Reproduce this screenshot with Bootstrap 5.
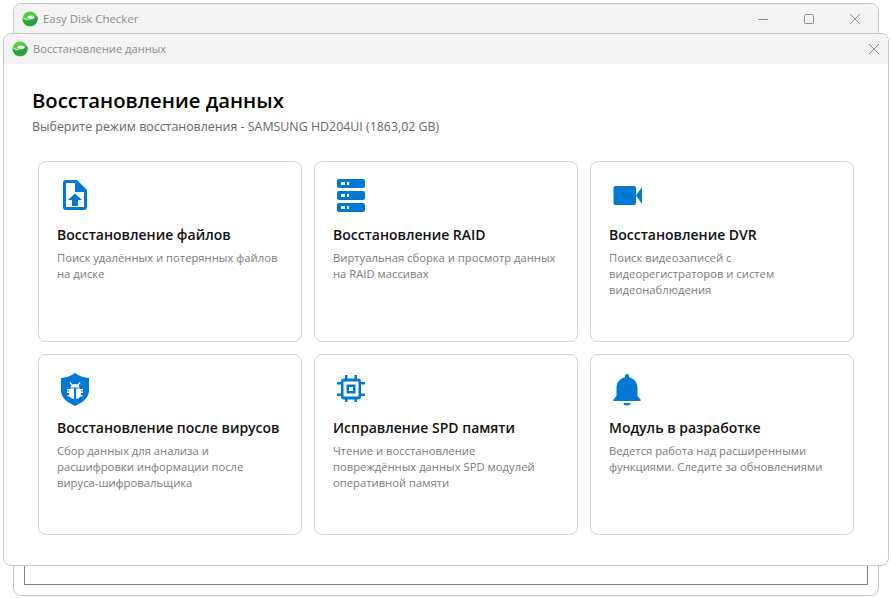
<!DOCTYPE html>
<html lang="ru">
<head>
    <meta charset="UTF-8">
    <meta name="viewport" content="width=device-width, initial-scale=1.0">
    <title>Easy Disk Checker</title>
    <link href="https://cdn.jsdelivr.net/npm/bootstrap@5.3.0/dist/css/bootstrap.min.css" rel="stylesheet">
    <style>
        html, body { height: 100%; overflow: hidden; background: #fff; }
        body { font-family: "Open Sans", "Noto Sans", sans-serif; font-size: 12px; }
        .app-window { position: absolute; left: 13px; top: 3px; width: 866px; height: 593px; background: #fff; border: 1px solid #c4c4c4; border-radius: 8px; overflow: hidden; }
        .app-bar { height: 30px; background: #f3f3f3; padding-left: 8px; color: #8c8c8c; }
        .app-title { font-size: 11.4px; margin-left: 5px; }
        .dialog-title { font-size: 11.15px; margin-left: 5px; }
        .win-btn { width: 46px; height: 30px; }
        .app-inner { position: absolute; left: 10px; right: 10px; bottom: 10px; height: 60px; border: 1px solid #808080; }
        .dialog-window { position: absolute; left: 3px; top: 33px; width: 886px; height: 533px; background: #fff; border: 1px solid #c4c4c4; border-radius: 8px; overflow: hidden; }
        .dialog-bar { height: 30px; background: #f3f3f3; padding-left: 8px; padding-right: 9px; color: #8c8c8c; }
        .dialog-body { padding: 24px 34px 0 28px; }
        .page-title { font-size: 20.3px; font-weight: 600; color: #000; line-height: 24px; margin: 0; }
        .page-sub { font-size: 12.4px; color: #666; line-height: 16px; margin: 7px 0 0; }
        .mode-grid { display: grid; grid-template-columns: repeat(3, 264px); grid-auto-rows: 181px; gap: 12px; margin: 26px 0 0 6px; }
        .mode-card { border: 1px solid #d2d2d2; border-radius: 8px; padding: 16px 18px 0; background: #fff; }
        .mode-icon { display: block; height: 36px; width: 36px; margin-bottom: 11px; }
        .mode-title { font-size: 14px; font-weight: 600; color: #111; line-height: 20px; margin: 0 0 5px; white-space: nowrap; }
        .mode-desc { font-size: 11.25px; line-height: 16px; color: #7a7a7a; margin: 0; }
    </style>
</head>
<body>

<div class="app-window">
    <div class="app-bar d-flex align-items-center">
        <svg width="16" height="16" viewBox="0 0 16 16"><circle cx="8" cy="8" r="7.5" fill="#4fd03a"/><path d="M.6 7c2.500 2.500 6 3 9.400 1.500l5.400-2.700.4 2.200A7.500 7.500 0 0 1 .6 7z" fill="#2c9f48"/><path d="M.8 6.200c2.500 1.600 5 2 7.200 1.600L5 9.200C3.400 9 1.800 8.200.7 7z" fill="#b8f0a8"/><ellipse cx="9" cy="6.300" rx="3.500" ry="1.800" fill="#fff"/><path d="M13 5h.8v2H13zM14.500 5h.8v2h-.8z" fill="#2c9f48"/></svg>
        <span class="app-title">Easy Disk Checker</span>
        <div class="ms-auto d-flex">
            <div class="win-btn d-flex align-items-center justify-content-center"><svg width="10" height="10" viewBox="0 0 10 10"><path d="M0 5.500h10" stroke="#8f8f8f"/></svg></div>
            <div class="win-btn d-flex align-items-center justify-content-center"><svg width="10" height="10" viewBox="0 0 10 10"><rect x=".5" y=".5" width="9" height="9" rx="1" fill="none" stroke="#8f8f8f"/></svg></div>
            <div class="win-btn d-flex align-items-center justify-content-center"><svg width="10" height="10" viewBox="0 0 10 10"><path d="M0 0l10 10M10 0L0 10" stroke="#8f8f8f"/></svg></div>
        </div>
    </div>
    <div class="app-inner"></div>
</div>

<div class="dialog-window">
    <div class="dialog-bar d-flex align-items-center">
        <svg width="16" height="16" viewBox="0 0 16 16"><circle cx="8" cy="8" r="7.5" fill="#4fd03a"/><path d="M.6 7c2.500 2.500 6 3 9.400 1.500l5.400-2.700.4 2.200A7.500 7.500 0 0 1 .6 7z" fill="#2c9f48"/><path d="M.8 6.200c2.500 1.600 5 2 7.200 1.600L5 9.200C3.400 9 1.800 8.200.7 7z" fill="#b8f0a8"/><ellipse cx="9" cy="6.300" rx="3.500" ry="1.800" fill="#fff"/><path d="M13 5h.8v2H13zM14.500 5h.8v2h-.8z" fill="#2c9f48"/></svg>
        <span class="dialog-title">Восстановление данных</span>
        <svg class="ms-auto" width="10" height="10" viewBox="0 0 10 10"><path d="M0 0l10 10M10 0L0 10" stroke="#8f8f8f"/></svg>
    </div>
    <div class="dialog-body">
        <h1 class="page-title">Восстановление данных</h1>
        <p class="page-sub">Выберите режим восстановления - SAMSUNG HD204UI (1863,02 GB)</p>
        <div class="mode-grid">
            <div class="mode-card">
                <svg class="mode-icon" viewBox="0 0 36 36"><path fill-rule="evenodd" fill="#0078d4" d="M9 2h11l10 10v17a3 3 0 0 1-3 3H9a3 3 0 0 1-3-3V5a3 3 0 0 1 3-3zm0 3v24h18V14h-9V5z"/><path fill="#0078d4" d="M18 15.500l7 6.500h-4v6h-6v-6h-4z"/></svg>
                <h2 class="mode-title">Восстановление файлов</h2>
                <p class="mode-desc">Поиск удалённых и потерянных файлов<br>на диске</p>
            </div>
            <div class="mode-card">
                <svg class="mode-icon" viewBox="0 0 36 36"><path fill-rule="evenodd" fill="#0078d4" d="M6 1h24a2 2 0 0 1 2 2v5a2 2 0 0 1-2 2H6a2 2 0 0 1-2-2V3a2 2 0 0 1 2-2zm2 3v3h4V4zm6 0v3h2V4zM6 13h24a2 2 0 0 1 2 2v5a2 2 0 0 1-2 2H6a2 2 0 0 1-2-2v-5a2 2 0 0 1 2-2zm2 3v3h4v-3zm6 0v3h2v-3zM6 25h24a2 2 0 0 1 2 2v5a2 2 0 0 1-2 2H6a2 2 0 0 1-2-2v-5a2 2 0 0 1 2-2zm2 3v3h4v-3zm6 0v3h2v-3z"/></svg>
                <h2 class="mode-title">Восстановление RAID</h2>
                <p class="mode-desc">Виртуальная сборка и просмотр данных<br>на RAID массивах</p>
            </div>
            <div class="mode-card">
                <svg class="mode-icon" viewBox="0 0 36 36"><path fill="#0078d4" d="M6.500 8H25a2 2 0 0 1 2 2v15a2 2 0 0 1-2 2H6.500a2 2 0 0 1-2-2V10a2 2 0 0 1 2-2zM27 17.500L33 9v17z"/></svg>
                <h2 class="mode-title">Восстановление DVR</h2>
                <p class="mode-desc">Поиск видеозаписей с<br>видеорегистраторов и систем<br>видеонаблюдения</p>
            </div>
            <div class="mode-card">
                <svg class="mode-icon" viewBox="0 0 36 36"><path fill="#0078d4" d="M18 2c4 3 8.500 4.500 14 5v12c0 7.500-6 12.500-14 16C10 31.500 4 26.500 4 19V7c5.500-.5 10-2 14-5z"/><path fill="#fff" d="M13.500 11l2 2.500a6 6 0 0 1 5 0l2-2.500 1 1-2 2.500c.6.600 1 1.300 1.200 2H13.300c.2-.7.600-1.400 1.200-2l-2-2.500zM10 18h3v-.500h4V28c-2 0-3.500-1-4.200-2.500H10.500V24h1.800c-.2-.6-.3-1.200-.3-2H10v-1.500h2V19.500h-2zm16 0h-3v-.500h-4V28c2 0 3.500-1 4.200-2.500h2.300V24h-1.800c.2-.6.300-1.200.3-2H26v-1.500h-2V19.500h2z"/></svg>
                <h2 class="mode-title">Восстановление после вирусов</h2>
                <p class="mode-desc">Сбор данных для анализа и<br>расшифровки информации после<br>вируса-шифровальщика</p>
            </div>
            <div class="mode-card">
                <svg class="mode-icon" viewBox="0 0 36 36"><path fill-rule="evenodd" fill="#0078d4" d="M12 4h2.500v3.500h7V4H24v3.500h1a3 3 0 0 1 3 3V11h4v2.500h-4v9h4V25h-4v.5a3 3 0 0 1-3 3h-1V31h-2.500v-2.500h-7V31H12v-2.500h-1a3 3 0 0 1-3-3V25H4v-2.500h4v-9H4V11h4v-.5a3 3 0 0 1 3-3h1zm-1.500 6.500v15h15v-15z"/><path fill-rule="evenodd" fill="#0078d4" d="M13.500 13.500h9v9h-9zm2.500 2.500v4h4v-4z"/></svg>
                <h2 class="mode-title">Исправление SPD памяти</h2>
                <p class="mode-desc">Чтение и восстановление<br>повреждённых данных SPD модулей<br>оперативной памяти</p>
            </div>
            <div class="mode-card">
                <svg class="mode-icon" viewBox="0 0 36 36"><path fill="#0078d4" d="M18 3c1.200 0 2 .9 2 2v1.200C25.200 7.300 28.500 11.500 28.500 17v8l3 3.500V30h-27v-1.500l3-3.500v-8C7.500 11.500 10.800 7.300 16 6.200V5c0-1.100.8-2 2-2zM14.500 32h7a3.500 2.500 0 0 1-7 0z"/></svg>
                <h2 class="mode-title">Модуль в разработке</h2>
                <p class="mode-desc">Ведется работа над расширенными<br>функциями. Следите за обновлениями</p>
            </div>
        </div>
    </div>
</div>

<script src="https://cdn.jsdelivr.net/npm/bootstrap@5.3.0/dist/js/bootstrap.bundle.min.js"></script>
</body>
</html>
